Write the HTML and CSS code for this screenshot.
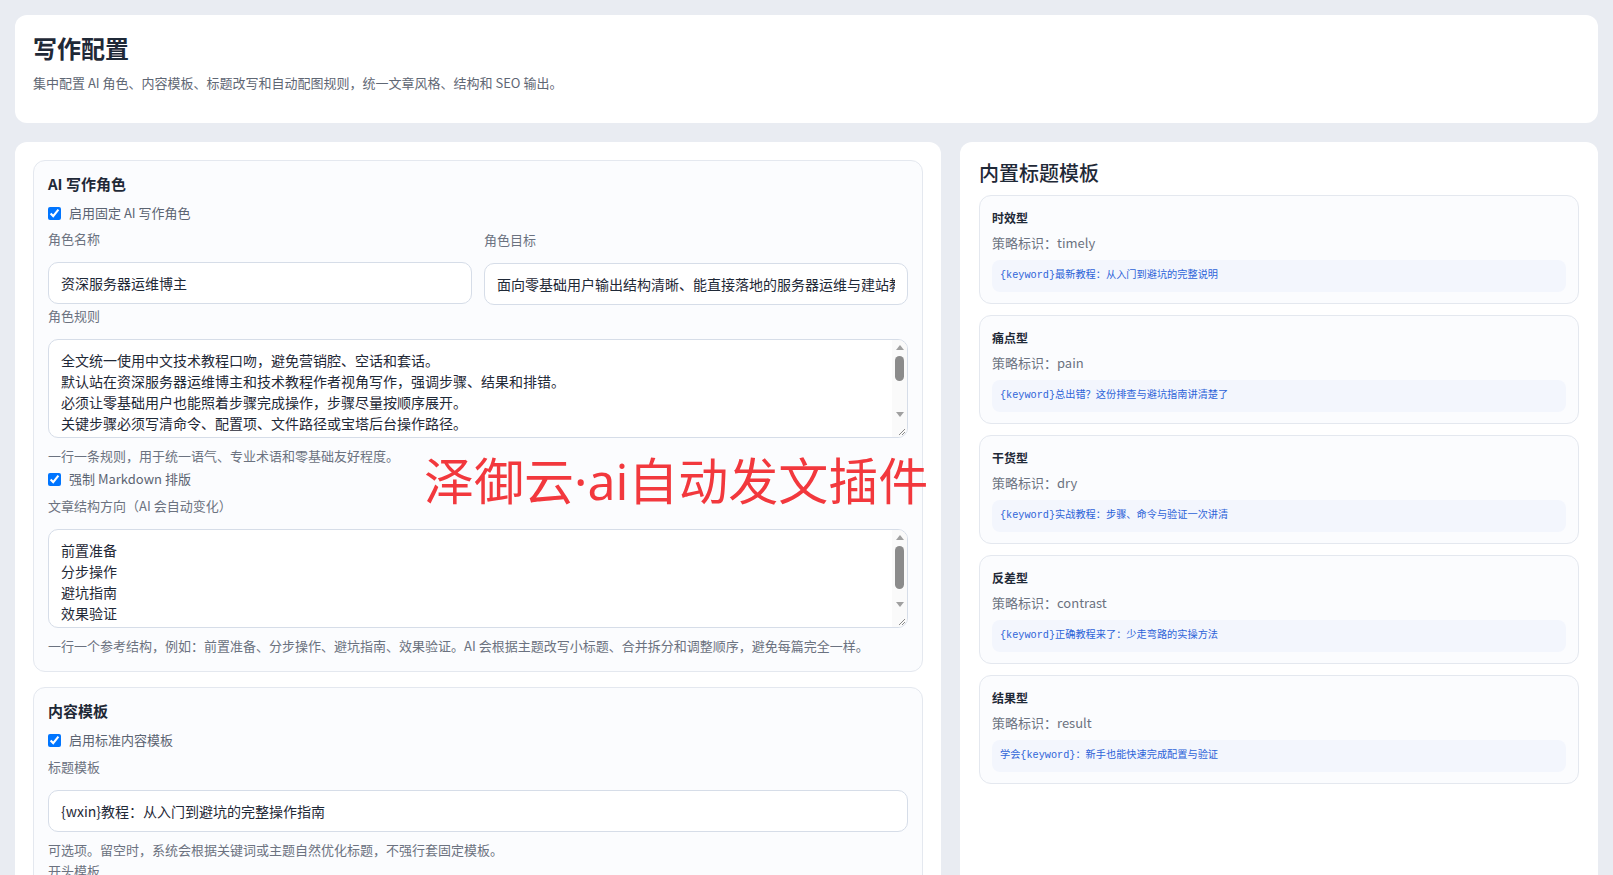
FILE: index.html
```html
<!DOCTYPE html>
<html lang="zh-CN">
<head>
    <meta charset="UTF-8" />
    <meta name="viewport" content="width=device-width, initial-scale=1.0" />
    <title>写作配置</title>
    <link rel="stylesheet" href="styles.css">
</head>
<body>
<div class="page">
    <header class="panel page-header">
        <h1>写作配置</h1>
        <p class="subtitle">集中配置 AI 角色、内容模板、标题改写和自动配图规则，统一文章风格、结构和 SEO 输出。</p>
    </header>

    <div class="layout">
        <main class="panel settings">
            <section class="group">
                <h3 class="group-title">AI 写作角色</h3>
                <label class="check"><input type="checkbox" checked> 启用固定 AI 写作角色</label>

                <div class="field-grid">
                    <div class="field">
                        <label class="field-label">角色名称</label>
                        <input class="text-input" type="text" value="资深服务器运维博主">
                    </div>
                    <div class="field">
                        <label class="field-label">角色目标</label>
                        <input class="text-input" type="text" value="面向零基础用户输出结构清晰、能直接落地的服务器运维与建站教程。">
                    </div>
                </div>

                <div class="field">
                    <label class="field-label">角色规则</label>
                    <div class="area-wrap">
                        <textarea class="text-area">全文统一使用中文技术教程口吻，避免营销腔、空话和套话。
默认站在资深服务器运维博主和技术教程作者视角写作，强调步骤、结果和排错。
必须让零基础用户也能照着步骤完成操作，步骤尽量按顺序展开。
关键步骤必须写清命令、配置项、文件路径或宝塔后台操作路径。
遇到报错时先说明可能原因，再给出排查和解决方法。
涉及删除、覆盖等风险操作时，必须提前提醒备份数据。
命令和代码统一放在代码块中，并说明每条命令的作用。
专业术语第一次出现时用一句话解释清楚。
不要编造不存在的软件版本、菜单名称或参数。
每个步骤完成后说明如何确认操作已经生效。
结尾给出效果验证方法和常见问题汇总。
避免大段堆砌理论，优先给出可执行的操作。</textarea>
                        <div class="scrollbar" aria-hidden="true">
                            <span class="sb-arrow sb-up"></span>
                            <span class="sb-track"><span class="sb-thumb thumb-small"></span></span>
                            <span class="sb-arrow sb-down"></span>
                        </div>
                        <svg class="resizer" width="15" height="15" viewBox="0 0 15 15" aria-hidden="true">
                            <path d="M13 7 L7 13 M13 10 L10 13" stroke="#8a8a8a" stroke-width="1"/>
                        </svg>
                    </div>
                    <p class="hint">一行一条规则，用于统一语气、专业术语和零基础友好程度。</p>
                </div>

                <label class="check"><input type="checkbox" checked> 强制 Markdown 排版</label>

                <div class="field">
                    <label class="field-label">文章结构方向（AI 会自动变化）</label>
                    <div class="area-wrap">
                        <textarea class="text-area">前置准备
分步操作
避坑指南
效果验证
常见问题
总结</textarea>
                        <div class="scrollbar" aria-hidden="true">
                            <span class="sb-arrow sb-up"></span>
                            <span class="sb-track"><span class="sb-thumb thumb-large"></span></span>
                            <span class="sb-arrow sb-down"></span>
                        </div>
                        <svg class="resizer" width="15" height="15" viewBox="0 0 15 15" aria-hidden="true">
                            <path d="M13 7 L7 13 M13 10 L10 13" stroke="#8a8a8a" stroke-width="1"/>
                        </svg>
                    </div>
                    <p class="hint">一行一个参考结构，例如：前置准备、分步操作、避坑指南、效果验证。AI 会根据主题改写小标题、合并拆分和调整顺序，避免每篇完全一样。</p>
                </div>
            </section>

            <section class="group">
                <h3 class="group-title">内容模板</h3>
                <label class="check"><input type="checkbox" checked> 启用标准内容模板</label>

                <div class="field">
                    <label class="field-label">标题模板</label>
                    <input class="text-input" type="text" value="{wxin}教程：从入门到避坑的完整操作指南">
                    <p class="hint">可选项。留空时，系统会根据关键词或主题自然优化标题，不强行套固定模板。</p>
                </div>

                <div class="field">
                    <label class="field-label">开头模板</label>
                    <textarea class="text-area">很多新手在操作{wxin}时都会遇到各种问题，本文按步骤带你完整走一遍。</textarea>
                </div>
            </section>
        </main>

        <aside class="panel templates">
            <h2 class="templates-title">内置标题模板</h2>
            <div class="tpl-list">
                <div class="tpl">
                    <div class="tpl-name">时效型</div>
                    <div class="tpl-key">策略标识：timely</div>
                    <div class="tpl-code">{keyword}最新教程：从入门到避坑的完整说明</div>
                </div>
                <div class="tpl">
                    <div class="tpl-name">痛点型</div>
                    <div class="tpl-key">策略标识：pain</div>
                    <div class="tpl-code">{keyword}总出错？这份排查与避坑指南讲清楚了</div>
                </div>
                <div class="tpl">
                    <div class="tpl-name">干货型</div>
                    <div class="tpl-key">策略标识：dry</div>
                    <div class="tpl-code">{keyword}实战教程：步骤、命令与验证一次讲清</div>
                </div>
                <div class="tpl">
                    <div class="tpl-name">反差型</div>
                    <div class="tpl-key">策略标识：contrast</div>
                    <div class="tpl-code">{keyword}正确教程来了：少走弯路的实操方法</div>
                </div>
                <div class="tpl">
                    <div class="tpl-name">结果型</div>
                    <div class="tpl-key">策略标识：result</div>
                    <div class="tpl-code">学会{keyword}：新手也能快速完成配置与验证</div>
                </div>
            </div>
        </aside>
    </div>

    <div class="watermark">泽御云<span class="wm-latin">·ai</span>自动发文插件</div>
</div>
</body>
</html>
```

FILE: styles.css
```css
:root {
    --primary-text: #1f2937;
    --secondary-text: #6b7280;
    --check-text: #5b6472;
    --page-bg: #e9ecf2;
    --card-color: #ffffff;
    --group-bg: #fbfcfe;
    --group-border: #e4e8ef;
    --input-border: #d6dde8;
    --code-bg: #f3f6fd;
    --code-text: #2d63d8;
    --font: "Noto Sans CJK SC", "Noto Sans", sans-serif;
    --mono: "Liberation Mono", "Noto Sans CJK SC", monospace;
}

*, *::before, *::after { box-sizing: border-box; }

html, body { height: 100%; overflow: hidden; }

body {
    margin: 0;
    font-family: var(--font);
    background-color: var(--page-bg);
    color: var(--primary-text);
}

.page { position: relative; padding: 15px; }

.panel { background-color: var(--card-color); border-radius: 12px; }

/* page header */
.page-header { padding: 18px 18px 30px; }
.page-header h1 {
    margin: 0; font-size: 24px; line-height: 30px; font-weight: 600;
}
.subtitle {
    margin: 10px 0 0; font-size: 13px; line-height: 20px; color: #5f6774;
}

.layout {
    display: grid; grid-template-columns: minmax(0, 1fr) 638px;
    gap: 19px; margin-top: 19px; align-items: stretch;
}

/* left: settings */
.settings { padding: 18px; min-height: 900px; }

.group {
    background-color: var(--group-bg);
    border: 1px solid var(--group-border);
    border-radius: 12px;
    padding: 12px 14px 15px;
}
.group + .group { margin-top: 15px; }

.group-title {
    margin: 0; font-size: 15px; line-height: 22px; font-weight: 600;
}

.check {
    display: flex; align-items: center; gap: 8px;
    margin-top: 3px; font-size: 13px; line-height: 20px; color: var(--check-text);
}
.group-title + .check { margin-top: 8px; }
.check input { width: 13px; height: 13px; margin: 0; }

.field-grid {
    display: grid; grid-template-columns: 1fr 1fr; gap: 12px;
}
.field-grid, .field { margin-top: 6px; }
.check + .field { margin-top: 7px; }
.field-grid .field { margin-top: 0; }
.field + .field, .field-grid + .field { margin-top: 1px; }

.field-label {
    display: block; margin-bottom: 13px;
    font-size: 13px; line-height: 20px; color: var(--secondary-text);
}

.text-input, .text-area {
    display: block; width: 100%;
    border: 1px solid var(--input-border); border-radius: 10px;
    background-color: #fff; color: var(--primary-text);
    font-family: var(--font); font-size: 14px;
    outline: none;
}
.text-input { height: 42px; padding: 0 12px; }
.text-area {
    height: 99px; padding: 10px 28px 10px 12px; line-height: 21px;
    resize: none; overflow: hidden;
}

/* drawn scrollbar + resize grip over the textarea */
.area-wrap { position: relative; }
.scrollbar {
    position: absolute; top: 1px; right: 1px; bottom: 16px; width: 15px;
    display: flex; flex-direction: column; background-color: #fafafa;
    border-top-right-radius: 9px;
}
.sb-arrow { height: 15px; display: flex; align-items: center; justify-content: center; }
.sb-up::before, .sb-down::before {
    content: ""; width: 0; height: 0;
    border-left: 4.5px solid transparent; border-right: 4.5px solid transparent;
}
.sb-up::before { border-bottom: 5px solid #a0a0a0; }
.sb-down::before { border-top: 5px solid #a0a0a0; }
.sb-track { flex: 1; padding: 1px 3px; }
.sb-thumb { display: block; width: 9px; background-color: #8b8b8b; border-radius: 5px; }
.thumb-small { height: 25px; }
.thumb-large { height: 43px; }
.resizer {
    position: absolute; right: 1px; bottom: 1px;
    background-color: #fafafa; border-bottom-right-radius: 9px;
}

.hint {
    margin: 8px 0 0; font-size: 13px; line-height: 20px; color: var(--secondary-text);
}

/* right: built-in title templates */
.templates { padding: 17px 19px 18px; }
.templates-title {
    margin: 0 0 8px; font-size: 20px; line-height: 28px; font-weight: 500;
}
.tpl-list { display: flex; flex-direction: column; gap: 11px; }
.tpl {
    background-color: var(--group-bg);
    border: 1px solid var(--group-border);
    border-radius: 12px;
    padding: 13px 12px 11px;
}
.tpl-name { font-size: 12px; line-height: 18px; font-weight: 700; }
.tpl-key {
    margin-top: 6px; font-size: 13px; line-height: 20px; color: var(--secondary-text);
}
.tpl-code {
    margin-top: 7px; height: 32px; padding: 0 8px;
    background-color: var(--code-bg); border-radius: 8px;
    font-family: var(--mono); font-size: 10.2px; line-height: 32px;
    color: var(--code-text); white-space: nowrap; overflow: hidden;
}

.watermark {
    position: absolute; left: 424px; top: 453px;
    font-size: 50px; line-height: 1; color: #f2383d;
    white-space: nowrap; pointer-events: none;
}
.wm-latin { font-family: "Noto Sans", sans-serif; }
```
